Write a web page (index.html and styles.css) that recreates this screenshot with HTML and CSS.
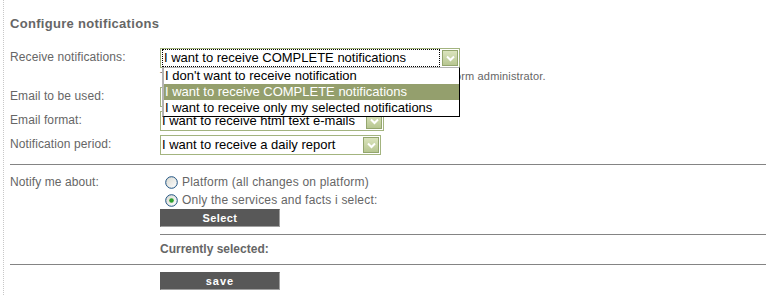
FILE: index.html
```html
<!DOCTYPE html>
<html lang="en">
<head>
  <meta charset="UTF-8" />
  <title>Configure notifications</title>
  <link rel="stylesheet" href="styles.css">
</head>
<body>
  <div class="page">
    <h2>Configure notifications</h2>

    <div class="row">
      <div class="label">Receive notifications:</div>
      <div class="field">
        <div class="select wide open">
          <span class="value"><span class="focus">I want to receive COMPLETE notifications</span></span>
          <span class="arrow"><svg width="9" height="7" viewBox="0 0 9 7"><path d="M1 1.5 L4.5 5 L8 1.5" fill="none" stroke="#fff" stroke-width="2"/></svg></span>
          <ul class="options">
            <li>I don't want to receive notification</li>
            <li class="hl">I want to receive COMPLETE notifications</li>
            <li>I want to receive only my selected notifications</li>
          </ul>
        </div>
        <div class="hint">The e-mail address to be used is always set up by the platform administrator.</div>
      </div>
    </div>

    <div class="row">
      <div class="label">Email to be used:</div>
      <div class="field">
        <div class="textbox">user@example.com</div>
      </div>
    </div>

    <div class="row">
      <div class="label">Email format:</div>
      <div class="field">
        <div class="select fmt">
          <span class="value">I want to receive html text e-mails</span>
          <span class="arrow"><svg width="9" height="7" viewBox="0 0 9 7"><path d="M1 1.5 L4.5 5 L8 1.5" fill="none" stroke="#fff" stroke-width="2"/></svg></span>
        </div>
      </div>
    </div>

    <div class="row">
      <div class="label">Notification period:</div>
      <div class="field">
        <div class="select period">
          <span class="value">I want to receive a daily report</span>
          <span class="arrow"><svg width="9" height="7" viewBox="0 0 9 7"><path d="M1 1.5 L4.5 5 L8 1.5" fill="none" stroke="#fff" stroke-width="2"/></svg></span>
        </div>
      </div>
    </div>

    <hr class="line">

    <div class="row notify">
      <div class="label">Notify me about:</div>
      <div class="field">
        <div class="radio">
          <svg width="13" height="13" viewBox="0 0 13 13"><defs><linearGradient id="rg" x1="0" y1="0" x2="1" y2="1"><stop offset="0" stop-color="#d8d8d0"/><stop offset="1" stop-color="#fff"/></linearGradient></defs><circle cx="6.5" cy="6.5" r="5.8" fill="url(#rg)" stroke="#1c5180" stroke-width="1"/></svg>
          <span>Platform (all changes on platform)</span>
        </div>
        <div class="radio">
          <svg width="13" height="13" viewBox="0 0 13 13"><circle cx="6.5" cy="6.5" r="5.8" fill="url(#rg)" stroke="#1c5180" stroke-width="1"/><circle cx="6.5" cy="6.5" r="2.3" fill="#2da02d"/></svg>
          <span>Only the services and facts i select:</span>
        </div>
        <button class="btn">Select</button>
      </div>
    </div>

    <hr class="line short">
    <div class="current">Currently selected:</div>
    <hr class="line">

    <div class="actions">
      <button class="btn save">save</button>
    </div>
  </div>
</body>
</html>
```

FILE: styles.css
```css
html, body { margin: 0; padding: 0; background: #fff; }
body { font-family: "Liberation Sans", Arial, sans-serif; color: #666; }
.page { margin-left: 3px; border-left: 1px dotted #c8c8c8; padding: 16px 0 0 6px; width: 763px; min-height: 295px; box-sizing: border-box; }
h2 { margin: 0 0 16px; font-size: 13px; line-height: 16px; font-weight: bold; color: #666; letter-spacing: 0.3px; }

.row { display: flex; margin-bottom: 4px; }
.label { width: 150px; font-size: 12px; line-height: 14px; padding-top: 2px; letter-spacing: 0.1px; }
.field { flex: 1; }

.select { position: relative; display: flex; height: 18px; border: 1px solid #a3b47f; background: #fff; color: #000; font-size: 13px; line-height: 18px; }
.select.wide { width: 298px; }
.select.fmt { width: 222px; }
.select.period { width: 219px; }
.select .value { flex: 1; padding-left: 1px; white-space: nowrap; overflow: hidden; }
.select .focus { display: block; border: 1px dotted #000; line-height: 16px; padding-left: 1px; margin-right: 1px; }
.select .arrow { width: 14px; height: 14px; margin: 1px; border: 1px solid #94a66e; background: linear-gradient(#dbe4bd, #b7c691); display: flex; align-items: center; justify-content: center; }

.options { position: absolute; left: 1px; top: 18px; width: 295px; margin: 0; padding: 0; list-style: none; background: #fff; border: 1px solid #000; border-left: 2px solid #b4b4b4; border-top: 1px solid #b4b4b4; z-index: 2; }
.options li { height: 16px; line-height: 16px; padding-left: 1px; white-space: nowrap; }
.options li.hl { background: #949f6d; color: #fff; }

.hint { font-size: 11px; line-height: 14px; margin-top: 1px; white-space: nowrap; letter-spacing: 0.15px; }
.textbox { width: 220px; height: 18px; border: 1px solid #a3b47f; font-size: 13px; line-height: 18px; color: #000; padding-left: 2px; }

.line { border: 0; border-top: 1px solid #848484; margin: 9px 0 0; height: 0; }
.line.short { margin: 7px 0 0 150px; }

.notify { padding-top: 8px; margin-bottom: 0; }
.radio { display: flex; align-items: center; height: 18px; font-size: 12px; letter-spacing: 0.2px; padding-left: 5px; }
.radio svg { margin-right: 4px; }

.btn { display: block; width: 120px; height: 18px; padding: 0; background: #585858; color: #fff; border: 1px solid #585858; border-right-color: #a0a0a0; border-bottom-color: #a0a0a0; font-family: "Liberation Sans", Arial, sans-serif; font-size: 11px; font-weight: bold; letter-spacing: 0.4px; }
.btn.save { letter-spacing: 1px; }

.current { margin: 0 0 0 150px; padding-top: 7px; height: 29px; font-size: 12px; line-height: 14px; font-weight: bold; color: #666; box-sizing: border-box; }
.current + .line { margin-top: 0; }
.actions { padding: 7px 0 0 150px; }
```
